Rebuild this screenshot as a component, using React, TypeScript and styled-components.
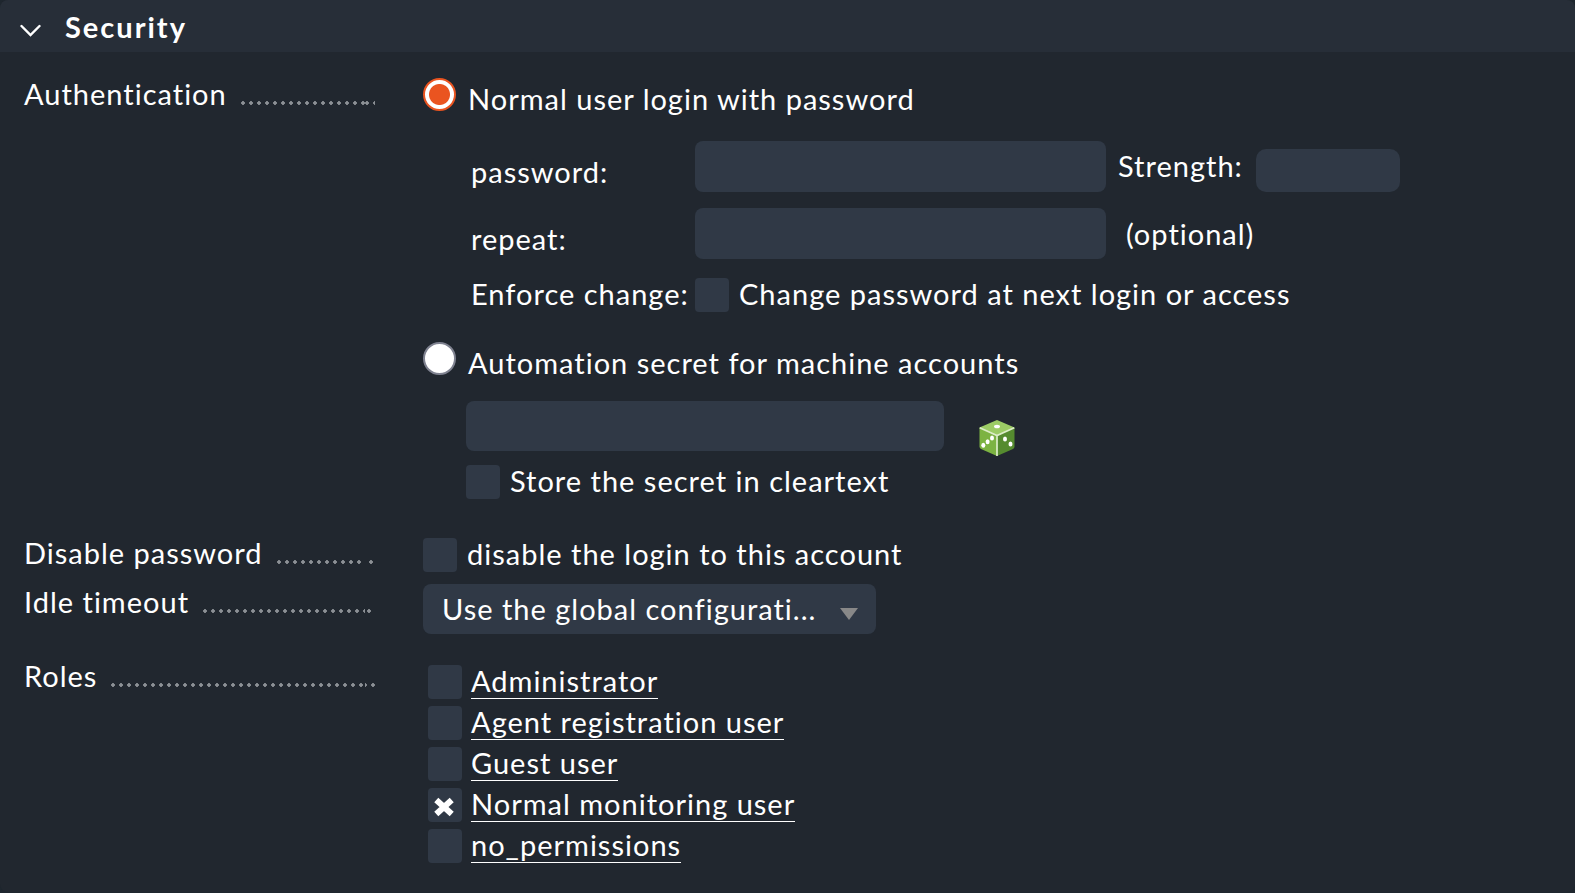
import React from 'react';
import styled, { createGlobalStyle, css } from 'styled-components';

const color = {
  page: '#1e262e',
  panel: '#21272f',
  header: '#272e38',
  field: '#303946',
  text: '#ffffff',
  dots: '#8c9095',
  accent: '#ea5420',
};

const GlobalStyle = createGlobalStyle`
  *, *::before, *::after { box-sizing: border-box; }
  body {
    margin: 0;
    background: ${color.page};
    color: ${color.text};
    font-family: Lato, "Liberation Sans", sans-serif;
    font-size: 29px;
    line-height: 32px;
    letter-spacing: 1px;
  }
`;

const Panel = styled.section`
  min-height: 892px;
  background: ${color.panel};
  border-radius: 8px;
  overflow: hidden;
`;

const Header = styled.header`
  background: ${color.header};
`;

const Title = styled.h2`
  margin: 0;
  font-size: 29px;
`;

const FoldButton = styled.button`
  display: flex;
  align-items: center;
  gap: 24px;
  width: 100%;
  height: 52px;
  padding: 2px 20px 0;
  border: 0;
  background: none;
  color: inherit;
  font: inherit;
  font-weight: 700;
  letter-spacing: 2px;
  text-align: left;

  svg { margin-top: 6px; }
`;

const Form = styled.form`
  padding: 26px 24px 20px;
`;

const Row = styled.div<{ $before?: number }>`
  display: grid;
  grid-template-columns: 351px minmax(0, 1fr);
  column-gap: 48px;
  align-items: start;
  margin-top: ${(p) => p.$before ?? 0}px;
`;

const RowTitle = styled.div<{ $drop?: number }>`
  display: flex;
  padding-top: ${(p) => p.$drop ?? 0}px;
  line-height: 30px;
  white-space: nowrap;
`;

const Leader = styled.span<{ $tail: number }>`
  display: flex;
  flex: 1;
  height: 4px;
  margin: 22px 0 0 14px;

  &::before,
  &::after {
    content: '';
    background: radial-gradient(circle at 2px 2px, ${color.dots} 0 1px, ${color.dots}cc 2px, transparent 2px) 0 0 / 8px 4px repeat-x;
  }
  &::before { flex: 1; }
  &::after {
    width: 10px;
    background-position-x: ${(p) => p.$tail}px;
  }
`;

const Choice = styled.div`
  display: flex;
  align-items: flex-start;
  gap: 12px;

  label { margin-top: 5px; }
`;

const Radio = styled.input.attrs({ type: 'radio' })`
  appearance: none;
  flex: none;
  width: 33px;
  height: 33px;
  margin: 0;
  border: 2px solid #7f8290;
  border-radius: 50%;
  background: #ffffff;

  &:checked {
    border-color: ${color.accent};
    background: radial-gradient(circle, ${color.accent} 10px, #ffffff 11px);
  }
`;

const boxStyle = css`
  border: 0;
  background-color: ${color.field};
`;

const Check = styled.input.attrs({ type: 'checkbox' })`
  ${boxStyle}
  appearance: none;
  flex: none;
  width: 34px;
  height: 34px;
  margin: 0;
  border-radius: 4px;

  &:checked {
    background-image: url("data:image/svg+xml,%3Csvg xmlns='http://www.w3.org/2000/svg' viewBox='0 0 34 34'%3E%3Cpath d='M10.500 14L21.500 24M21.500 14L10.500 24' stroke='white' stroke-width='6' stroke-linecap='square'/%3E%3C/svg%3E");
  }
`;

const CheckLine = styled.div<{ $drop?: number }>`
  display: flex;
  gap: 10px;
  padding-top: ${(p) => p.$drop ?? 0}px;
`;

const TextBox = styled.input`
  ${boxStyle}
  display: block;
  height: 51px;
  padding: 0 16px;
  border-radius: 8px;
  color: inherit;
  font: inherit;
  letter-spacing: inherit;
`;

const PasswordGrid = styled.div`
  display: grid;
  grid-template-columns: 224px minmax(0, 1fr);
  row-gap: 16px;
  margin: 26px 0 0 48px;
`;

const FieldName = styled.label<{ $drop: number }>`
  padding-top: ${(p) => p.$drop}px;
  white-space: nowrap;
`;

const FieldLine = styled.div`
  display: flex;
  align-items: center;

  ${TextBox} { width: 411px; }
`;

const Strength = styled.div`
  display: flex;
  align-items: flex-end;
  gap: 13px;
  margin-left: 12px;
`;

const StrengthBar = styled.div`
  ${boxStyle}
  width: 144px;
  height: 43px;
  margin-top: 8px;
  border-radius: 10px;
`;

const StrengthName = styled.span`
  align-self: center;
  padding-bottom: 2px;
`;

const Optional = styled.span`
  margin-left: 20px;
`;

const SecretBlock = styled.div`
  display: flex;
  flex-direction: column;
  gap: 8px;
  margin: 22px 0 0 43px;
`;

const SecretLine = styled.div`
  display: flex;
  align-items: flex-start;
  gap: 34px;

  ${TextBox} { width: 478px; height: 50px; }
`;

const DiceButton = styled.button`
  height: 38px;
  margin: 18px 0 0;
  padding: 0;
  border: 0;
  background: none;

  svg { display: block; }
`;

const SelectBox = styled.div`
  ${boxStyle}
  display: grid;
  grid-template-columns: 1fr;
  align-items: center;
  width: 453px;
  border-radius: 8px;

  > * { grid-area: 1 / 1; }
  svg { justify-self: end; margin: 10px 18px 0 0; pointer-events: none; }
`;

const Select = styled.select`
  appearance: none;
  width: 100%;
  height: 50px;
  padding: 0 50px 0 19px;
  border: 0;
  background: none;
  color: inherit;
  font: inherit;
  letter-spacing: inherit;
`;

const RoleList = styled.ul`
  display: flex;
  flex-direction: column;
  gap: 7px;
  margin: 0;
  padding: 4px 0 0 5px;
  list-style: none;
`;

const RoleItem = styled.li`
  display: flex;
  gap: 9px;
`;

const RoleLink = styled.a`
  height: 34px;
  border-bottom: 1px solid ${color.text};
  color: inherit;
  text-decoration: none;
`;

const roles = [
  { id: 'admin', name: 'Administrator' },
  { id: 'agent', name: 'Agent registration user' },
  { id: 'guest', name: 'Guest user' },
  { id: 'user', name: 'Normal monitoring user', on: true },
  { id: 'none', name: 'no_permissions' },
];

const Chevron = () => (
  <svg width="21" height="13" viewBox="0 0 21 13" fill="none" stroke="#fff" strokeWidth="2.4" aria-hidden="true">
    <path d="M1.500 2 10.500 11 19.500 2" strokeLinecap="round" />
  </svg>
);

const Dice = () => (
  <svg width="38" height="38" viewBox="0 0 37 38" aria-hidden="true">
    <path d="M18.500 1 36 8.500 18.500 17.500 1 8.500Z" fill="#9ccc65" />
    <path d="M1 8.500 18.500 17.500V37L2.500 30Q1 29 1 27.500Z" fill="#7cb342" />
    <path d="M36 8.500 18.500 17.500V37L34.500 30Q36 29 36 27.500Z" fill="#558b2f" />
    <path d="M1.200 8.700 18.500 16.500 35.800 8.700M18.500 16.500V37" fill="none" stroke="#dcedc8" strokeWidth="1.700" />
    <g fill="#fff">
      <ellipse cx="18.500" cy="7.500" rx="3" ry="1.800" />
      <ellipse cx="4.800" cy="26.300" rx="2" ry="2.500" />
      <ellipse cx="9.100" cy="22.700" rx="2" ry="2.500" />
      <ellipse cx="13.500" cy="19" rx="2" ry="2.500" />
      <ellipse cx="26.500" cy="20" rx="2" ry="2.500" />
      <ellipse cx="32" cy="25" rx="2" ry="2.500" />
    </g>
  </svg>
);

export default function App() {
  return (
    <>
      <GlobalStyle />
      <Panel>
        <Header>
          <Title>
            <FoldButton type="button" aria-expanded="true">
              <Chevron />
              <span>Security</span>
            </FoldButton>
          </Title>
        </Header>
        <Form>
          <Row>
            <RowTitle $drop={1}>
              Authentication
              <Leader $tail={0} />
            </RowTitle>
            <div>
              <Choice>
                <Radio id="auth-password" name="auth" defaultChecked />
                <label htmlFor="auth-password">Normal user login with password</label>
              </Choice>
              <PasswordGrid>
                <FieldName htmlFor="password" $drop={15}>password:</FieldName>
                <FieldLine>
                  <TextBox id="password" type="password" />
                  <Strength>
                    <StrengthName>Strength:</StrengthName>
                    <StrengthBar />
                  </Strength>
                </FieldLine>
                <FieldName htmlFor="repeat" $drop={15}>repeat:</FieldName>
                <FieldLine>
                  <TextBox id="repeat" type="password" />
                  <Optional>(optional)</Optional>
                </FieldLine>
                <FieldName as="span" $drop={3}>Enforce change:</FieldName>
                <CheckLine $drop={3}>
                  <Check id="enforce" />
                  <label htmlFor="enforce">Change password at next login or access</label>
                </CheckLine>
              </PasswordGrid>
            </div>
          </Row>
          <Row $before={30}>
            <span />
            <div>
              <Choice>
                <Radio id="auth-secret" name="auth" />
                <label htmlFor="auth-secret">Automation secret for machine accounts</label>
              </Choice>
              <SecretBlock>
                <SecretLine>
                  <TextBox type="text" aria-label="Automation secret" />
                  <DiceButton type="button" aria-label="Create random secret">
                    <Dice />
                  </DiceButton>
                </SecretLine>
                <CheckLine>
                  <Check id="cleartext" />
                  <label htmlFor="cleartext">Store the secret in cleartext</label>
                </CheckLine>
              </SecretBlock>
            </div>
          </Row>
          <Row $before={39}>
            <RowTitle>
              Disable password
              <Leader $tail={4} />
            </RowTitle>
            <CheckLine>
              <Check id="disable" />
              <label htmlFor="disable">disable the login to this account</label>
            </CheckLine>
          </Row>
          <Row $before={12}>
            <RowTitle $drop={3}>
              Idle timeout
              <Leader $tail={2} />
            </RowTitle>
            <SelectBox>
              <Select aria-label="Idle timeout">
                <option>Use the global configurati...</option>
              </Select>
              <svg width="18" height="12" viewBox="0 0 18 12" aria-hidden="true">
                <path d="M0 0H18L9 12Z" fill="#888" />
              </svg>
            </SelectBox>
          </Row>
          <Row $before={27}>
            <RowTitle>
              Roles
              <Leader $tail={6} />
            </RowTitle>
            <RoleList>
              {roles.map((role) => (
                <RoleItem key={role.id}>
                  <Check aria-label={role.name} defaultChecked={role.on} />
                  <RoleLink href={`#${role.id}`}>{role.name}</RoleLink>
                </RoleItem>
              ))}
            </RoleList>
          </Row>
        </Form>
      </Panel>
    </>
  );
}
